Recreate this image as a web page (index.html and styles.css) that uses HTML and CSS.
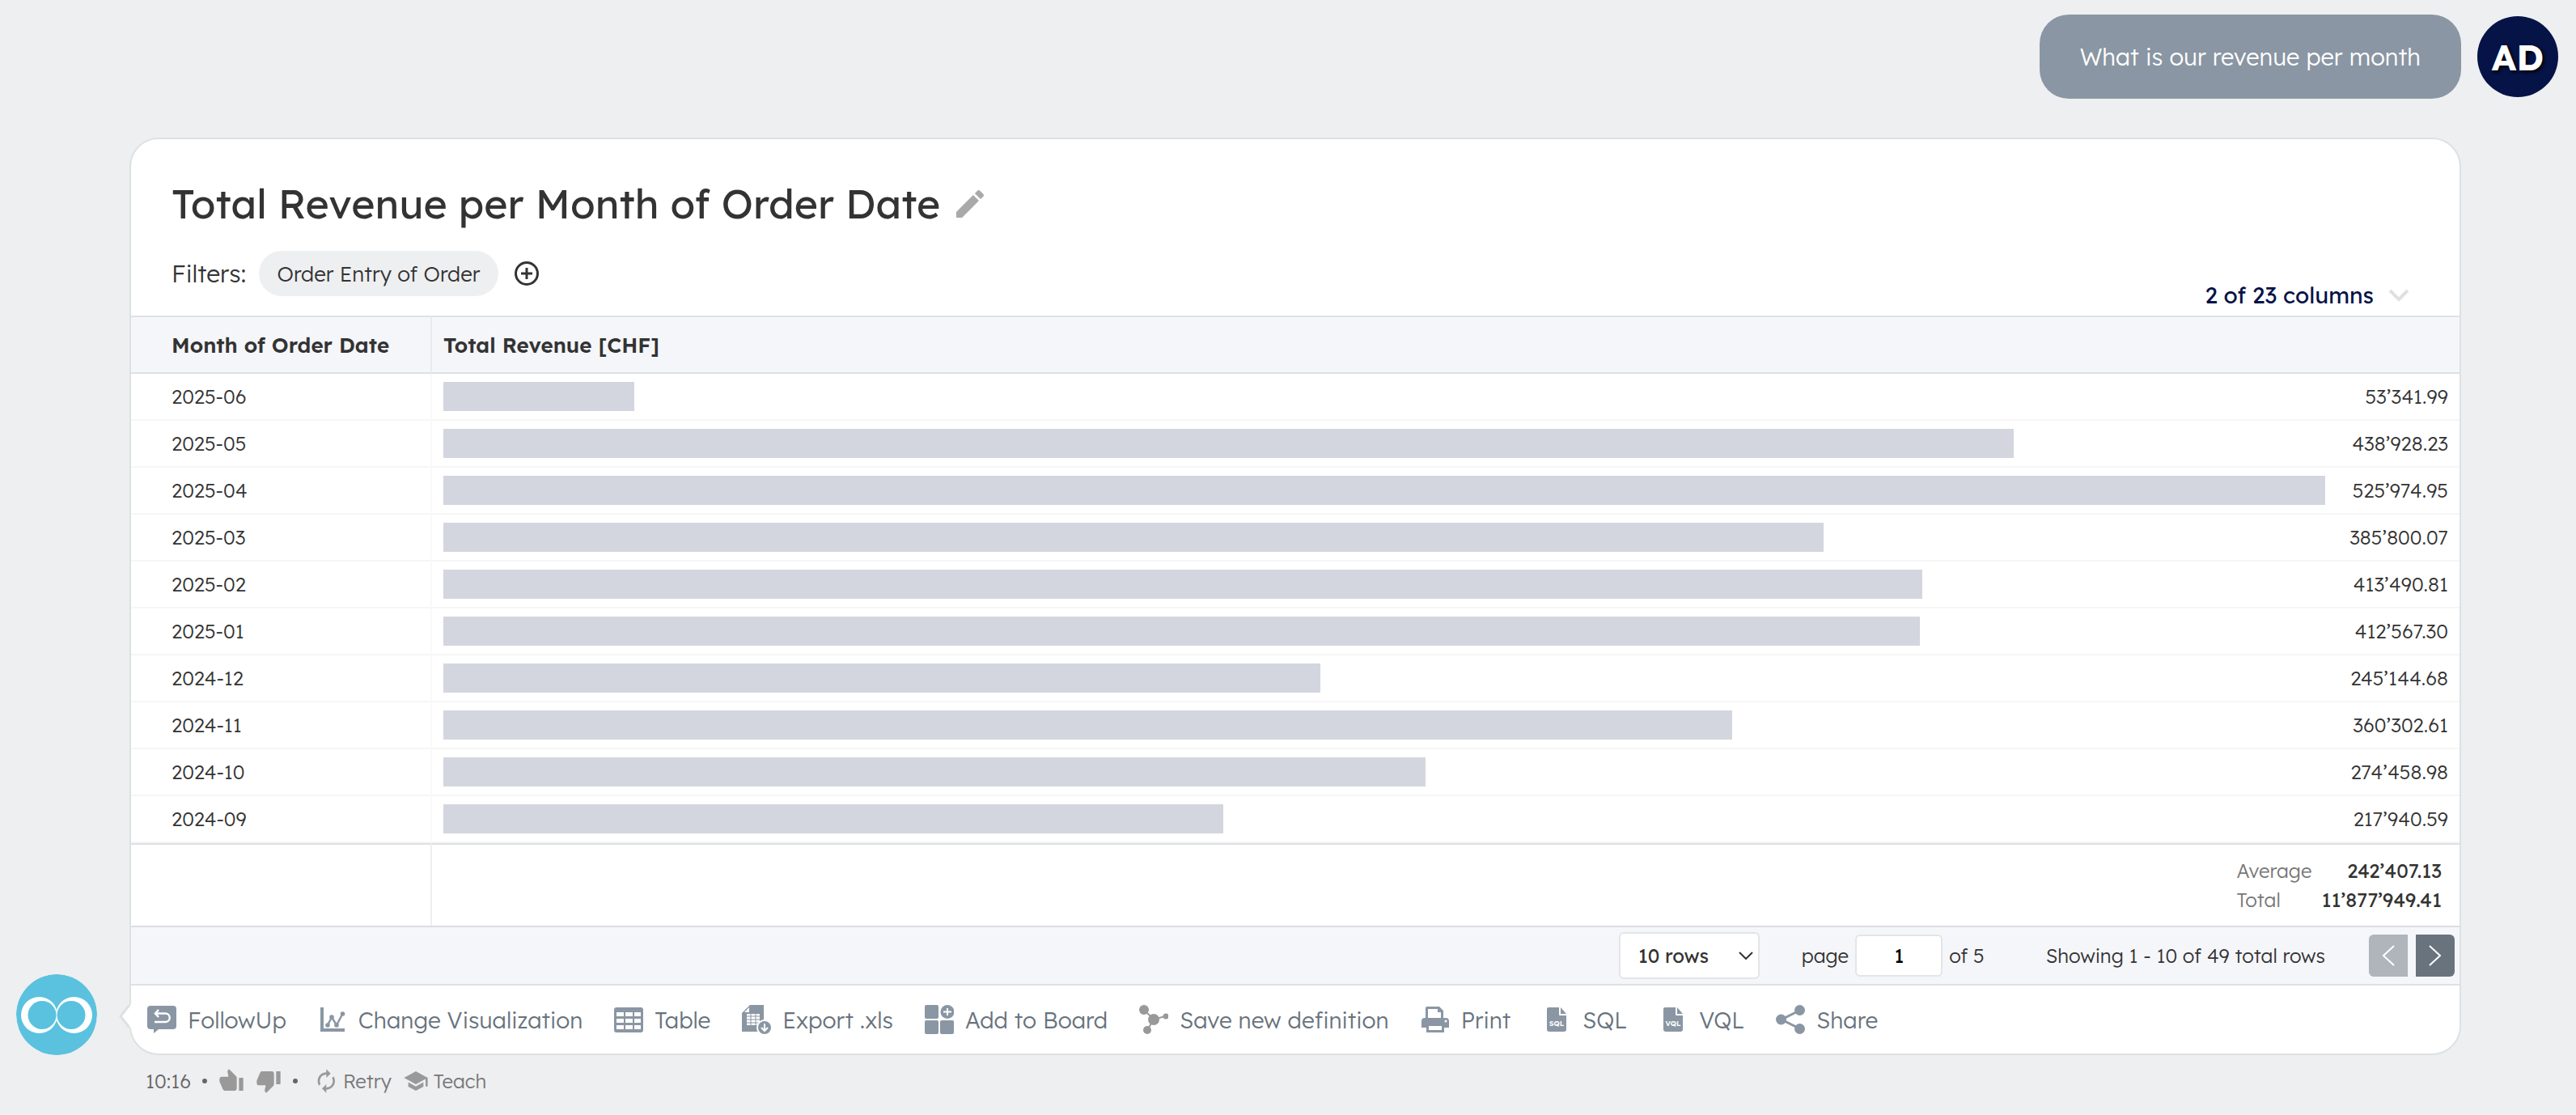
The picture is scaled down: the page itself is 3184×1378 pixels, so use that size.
FILE: index.html
```html
<!DOCTYPE html>
<html lang="en">
<head>
<meta charset="utf-8">
<title>Total Revenue per Month of Order Date</title>
<link rel="stylesheet" href="styles.css">
</head>
<body>
<main class="chat">
  <div class="question">
    <p class="bubble">What is our revenue per month</p>
    <div class="avatar user">AD</div>
  </div>

  <div class="answer">
    <svg class="avatar bot" viewBox="0 0 100 100" role="img" aria-label="Assistant">
      <circle cx="50" cy="50" r="50" fill="#5ac2de"/>
      <circle cx="28.500" cy="50.500" r="22.500" fill="#fff"/>
      <circle cx="71.500" cy="50.500" r="22.500" fill="#fff"/>
      <circle cx="32" cy="50.500" r="17.500" fill="#5ac2de"/>
      <circle cx="68" cy="50.500" r="17.500" fill="#5ac2de"/>
    </svg>

    <article class="card">
      <svg class="tail" viewBox="0 0 15 30" aria-hidden="true"><path d="M15 0 2 15l13 15z" fill="#fff"/><path d="M13 1 2 15l11 14" fill="none" stroke="#dde1e3" stroke-width="3"/></svg>
      <header class="head">
        <div class="title-row">
          <h1>Total Revenue per Month of Order Date</h1>
          <button class="plain" aria-label="Edit title"><svg width="34" height="34" viewBox="3 3 18 18" fill="#a9a9a9"><path d="M3 17.250V21h3.750L17.810 9.940l-3.750-3.750L3 17.250zM20.710 7.040c.39-.39.39-1.020 0-1.410l-2.340-2.340c-.39-.39-1.020-.39-1.410 0l-1.830 1.830 3.750 3.750 1.830-1.830z"/></svg></button>
        </div>
        <div class="filter-row">
          <div class="filters">
            <span class="filters-label">Filters:</span>
            <button class="chip">Order Entry of Order</button>
            <button class="plain" aria-label="Add filter"><svg width="30" height="30" viewBox="0 0 30 30" fill="none" stroke="#333" stroke-width="3"><circle cx="15" cy="15" r="13.500"/><path d="M15 8v14M8 15h14"/></svg></button>
          </div>
          <button class="plain columns"><span>2 of 23 columns</span><svg width="26" height="16" viewBox="0 0 26 16" fill="none" stroke="#e0e0e0" stroke-width="4"><path d="m2 2 11 11L24 2"/></svg></button>
        </div>
      </header>

      <table class="data">
        <thead><tr><th class="month">Month of Order Date</th><th>Total Revenue [CHF]</th></tr></thead>
        <tbody>
          <tr><td>2025-06</td><td><div class="measure"><div class="track"><div class="bar" style="width:10.14%"></div></div><span>53’341.99</span></div></td></tr>
          <tr><td>2025-05</td><td><div class="measure"><div class="track"><div class="bar" style="width:83.45%"></div></div><span>438’928.23</span></div></td></tr>
          <tr><td>2025-04</td><td><div class="measure"><div class="track"><div class="bar" style="width:100%"></div></div><span>525’974.95</span></div></td></tr>
          <tr><td>2025-03</td><td><div class="measure"><div class="track"><div class="bar" style="width:73.35%"></div></div><span>385’800.07</span></div></td></tr>
          <tr><td>2025-02</td><td><div class="measure"><div class="track"><div class="bar" style="width:78.61%"></div></div><span>413’490.81</span></div></td></tr>
          <tr><td>2025-01</td><td><div class="measure"><div class="track"><div class="bar" style="width:78.44%"></div></div><span>412’567.30</span></div></td></tr>
          <tr><td>2024-12</td><td><div class="measure"><div class="track"><div class="bar" style="width:46.61%"></div></div><span>245’144.68</span></div></td></tr>
          <tr><td>2024-11</td><td><div class="measure"><div class="track"><div class="bar" style="width:68.5%"></div></div><span>360’302.61</span></div></td></tr>
          <tr><td>2024-10</td><td><div class="measure"><div class="track"><div class="bar" style="width:52.18%"></div></div><span>274’458.98</span></div></td></tr>
          <tr><td>2024-09</td><td><div class="measure"><div class="track"><div class="bar" style="width:41.44%"></div></div><span>217’940.59</span></div></td></tr>
        </tbody>
        <tfoot><tr><td></td><td><dl class="totals"><dt>Average</dt><dd>242’407.13</dd><dt>Total</dt><dd>11’877’949.41</dd></dl></td></tr></tfoot>
      </table>

      <nav class="pager" aria-label="Pages">
        <div class="select"><select aria-label="Rows per page"><option>10 rows</option><option>25 rows</option></select><svg width="18" height="10" viewBox="0 0 18 10" fill="none" stroke="#333" stroke-width="2"><path d="m1 1 8 8 8-8"/></svg></div>
        <div class="page"><label for="page">page</label><input id="page" type="text" value="1"><span>of 5</span></div>
        <span class="showing">Showing 1 - 10 of 49 total rows</span>
        <div class="steps">
          <button class="step prev" disabled aria-label="Previous page"><svg width="16" height="26" viewBox="0 0 16 26" fill="none" stroke="#fff" stroke-width="2"><path d="M15 1 2 13l13 12"/></svg></button>
          <button class="step next" aria-label="Next page"><svg width="16" height="26" viewBox="0 0 16 26" fill="none" stroke="#fff" stroke-width="2"><path d="m1 1 13 12L1 25"/></svg></button>
        </div>
      </nav>

      <div class="actions">
        <button class="action"><svg viewBox="0 0 36 36"><path d="M4 1h28a4 4 0 0 1 4 4v21a4 4 0 0 1-4 4H14l-6 5v-5H4a4 4 0 0 1-4-4V5a4 4 0 0 1 4-4z"/><path d="m14 6-4 4.500 4 4.500M10 10.500h12.500a5 5 0 0 1 0 10.500H9" fill="none" stroke="#fff" stroke-width="2.500"/></svg>FollowUp</button>
        <button class="action"><svg viewBox="0 0 36 36"><path d="M3 3h4v26h26v4H3z"/><path d="m12 25 5-10 6 10 8-15" fill="none" stroke="#8a96a3" stroke-width="2.500"/><circle cx="12" cy="25" r="2.800"/><circle cx="17" cy="15" r="2.800"/><circle cx="23" cy="25" r="2.800"/><circle cx="30.500" cy="11" r="2.800"/></svg>Change Visualization</button>
        <button class="action"><svg viewBox="0 0 36 36"><path fill-rule="evenodd" d="M3 3h30a3 3 0 0 1 3 3v25a3 3 0 0 1-3 3H3a3 3 0 0 1-3-3V6a3 3 0 0 1 3-3zM3 9v5h9V9zm11 0v5h9V9zm11 0v5h8V9zM3 17v5h9v-5zm11 0v5h9v-5zm11 0v5h8v-5zM3 25v5h9v-5zm11 0v5h9v-5zm11 0v5h8v-5z"/></svg>Table</button>
        <button class="action"><svg viewBox="0 0 36 36"><path d="M10 0h17v33H0V10z"/><path d="M9 3v6H3z" fill="#fff"/><path d="M6 11h16v14H6z" fill="#fff"/><path d="M6 14h16M6 18h16M6 22h16M11 11v14M17 11v14" stroke="#8a96a3"/><circle cx="28" cy="28" r="10" fill="#fff"/><circle cx="28" cy="28" r="8"/><path d="M28 23v9m-4-4 4 4 4-4" fill="none" stroke="#fff" stroke-width="2"/></svg>Export .xls</button>
        <button class="action"><svg viewBox="0 0 36 36"><rect width="17" height="17" rx="2"/><rect y="19" width="17" height="17" rx="2"/><rect x="19" y="19" width="17" height="17" rx="2"/><circle cx="28" cy="8.500" r="8.500"/><path d="M28 4v9M23 8.500h10" stroke="#fff" stroke-width="2"/></svg>Add to Board</button>
        <button class="action"><svg class="gray" viewBox="0 0 36 36"><path d="m5 5 13 13 14-4M18 18l-8 13" fill="none" stroke="#999" stroke-width="2"/><circle cx="6" cy="6" r="6"/><circle cx="18" cy="18" r="7"/><circle cx="33" cy="14" r="3.500"/><circle cx="10" cy="31" r="5"/></svg>Save new definition</button>
        <button class="action"><svg viewBox="0 0 36 36"><path fill-rule="evenodd" d="M8 2h15l5 5v9h3a4 4 0 0 1 4 4v8h-6v6H7v-6H1v-8a4 4 0 0 1 4-4h1V4a2 2 0 0 1 2-2zm1 3v11h16V9h-4V5zm1 21v5h16v-5z"/><circle cx="31" cy="20" r="1.500" fill="#fff"/></svg>Print</button>
        <button class="action"><svg viewBox="0 0 36 36"><path d="M8 3h13v9a1 1 0 0 0 1 1h8v17a3 3 0 0 1-3 3H9a3 3 0 0 1-3-3V5a2 2 0 0 1 2-2zM23 3l7 8h-7z"/><text x="18" y="26" class="filetype">SQL</text></svg>SQL</button>
        <button class="action"><svg viewBox="0 0 36 36"><path d="M8 3h13v9a1 1 0 0 0 1 1h8v17a3 3 0 0 1-3 3H9a3 3 0 0 1-3-3V5a2 2 0 0 1 2-2zM23 3l7 8h-7z"/><text x="18" y="26" class="filetype">VQL</text></svg>VQL</button>
        <button class="action"><svg viewBox="0 0 36 36"><path d="M29 7 7 18l22 11" fill="none" stroke="#8a96a3" stroke-width="3"/><circle cx="29.500" cy="6.500" r="6.500"/><circle cx="6.500" cy="18" r="6.500"/><circle cx="29.500" cy="29.500" r="6.500"/></svg>Share</button>
      </div>
    </article>
  </div>

  <footer class="meta">
    <time>10:16</time>
    <span class="dot"></span>
    <div class="thumbs">
      <button class="plain" aria-label="Good answer"><svg width="32" height="32" viewBox="0 0 24 24" fill="#999"><path transform="matrix(-1 0 0 1 24 0)" d="M1 21h4V9H1v12zm22-11c0-1.100-.9-2-2-2h-6.310l.95-4.570.03-.32c0-.41-.17-.79-.44-1.060L14.170 1 7.590 7.590C7.220 7.950 7 8.450 7 9v10c0 1.100.9 2 2 2h9c.83 0 1.540-.5 1.840-1.220l3.020-7.050c.09-.23.14-.47.14-.73v-2z"/></svg></button>
      <button class="plain" aria-label="Bad answer"><svg width="32" height="32" viewBox="0 0 24 24" fill="#999"><path d="M15 3H6c-.83 0-1.540.5-1.840 1.220l-3.020 7.050c-.09.23-.14.47-.14.73v2c0 1.100.9 2 2 2h6.310l-.95 4.570-.03.32c0 .41.17.79.44 1.060L9.830 23l6.590-6.590c.36-.36.58-.86.58-1.410V5c0-1.100-.9-2-2-2zm4 0v12h4V3h-4z"/></svg></button>
    </div>
    <span class="dot"></span>
    <div class="meta-actions">
      <button class="plain meta-action"><svg width="28" height="32" viewBox="2 0 21 24" fill="#999"><path d="M12 6v3l4-4-4-4v3c-4.420 0-8 3.580-8 8 0 1.570.46 3.030 1.240 4.260L6.700 14.800c-.45-.83-.7-1.790-.7-2.800 0-3.310 2.690-6 6-6zm6.760 1.740L17.300 9.200c.44.84.7 1.790.7 2.800 0 3.310-2.690 6-6 6v-3l-4 4 4 4v-3c4.420 0 8-3.580 8-8 0-1.570-.46-3.030-1.240-4.260z"/></svg>Retry</button>
      <button class="plain meta-action"><svg width="32" height="32" viewBox="0 0 24 24" fill="#999"><path d="M5 13.180v4L12 21l7-3.820v-4L12 17l-7-3.820zM12 3L1 9l11 6 9-4.910V17h2V9L12 3z"/></svg>Teach</button>
    </div>
  </footer>
</main>
</body>
</html>
```
FILE: styles.css
```css
* { box-sizing: border-box; }

body {
  margin: 0;
  background: #eeeff1;
  color: #333;
  font-family: "Lexend", "Inter", sans-serif;
  font-size: 24px;
  font-weight: 300;
}

h1, p, dl, dd { margin: 0; }

button, input, select { font: inherit; color: inherit; }

.plain { padding: 0; border: 0; background: none; display: flex; align-items: center; }

.chat { padding: 18px 22px 0 20px; }

.question { display: flex; justify-content: flex-end; align-items: center; gap: 20px; }

.bubble {
  padding: 32px 50px;
  border-radius: 36px;
  background: #8a96a3;
  color: #fff;
  font-size: 29px;
  line-height: 40px;
}

.avatar { flex: none; width: 100px; height: 100px; border-radius: 50%; }

.user {
  display: flex;
  align-items: center;
  justify-content: center;
  background: #051347;
  color: #fff;
  font-size: 44px;
  font-weight: 700;
  text-shadow: 2px 2px 4px #000;
}

.answer { display: flex; align-items: flex-end; gap: 40px; margin: 48px 120px 0 0; }

.card {
  position: relative;
  flex: 1;
  border: 2px solid #dde1e3;
  border-radius: 36px;
  background: #fff;
}

.tail { position: absolute; left: -15px; bottom: 31px; width: 15px; height: 30px; }

.head { padding: 50px 62px 0 50px; }

.title-row { display: flex; align-items: center; gap: 20px; }

h1 { font-size: 50px; font-weight: 400; line-height: 60px; }

.filter-row { display: flex; justify-content: space-between; align-items: flex-end; margin-top: 28px; }

.filters { display: flex; align-items: center; gap: 16px; padding-bottom: 24px; }

.filters-label { font-size: 30px; line-height: 38px; }

.chip {
  height: 56px;
  margin-right: 4px;
  padding: 0 22px;
  border: 0;
  border-radius: 28px;
  background: #eeeff1;
  font-size: 26px;
}

.columns { gap: 18px; padding-bottom: 8px; color: #051347; font-size: 28px; font-weight: 400; line-height: 34px; }

.data { width: 100%; border-collapse: separate; border-spacing: 0; }

.data th {
  height: 72px;
  padding: 0 14px;
  border-top: 2px solid #dde1e3;
  border-bottom: 2px solid #dde1e3;
  background: #f5f6fa;
  font-size: 26px;
  font-weight: 600;
  text-align: left;
}

.data th:first-child { border-right: 2px solid #e8eaed; }

.data .month { width: 372px; }

.data th:first-child, .data td:first-child { padding-left: 50px; }

.data td { height: 58px; padding: 0 14px; border-bottom: 2px solid #f6f6f7; }

.data td:first-child { border-right: 2px solid #f9f9fa; }

.measure { display: flex; align-items: center; }

.measure span { width: 152px; text-align: right; }

.track { flex: 1; }

.bar { height: 36px; background: #d3d6de; }

.data tfoot td { height: 102px; padding: 0 22px; border-top: 2px solid #dde1e3; border-bottom: 0; }

.data tfoot td:first-child { border-right-color: #eeeff1; }

.totals {
  display: grid;
  grid-template-columns: max-content max-content;
  justify-content: end;
  column-gap: 12px;
  line-height: 36px;
}

.totals dt { color: #777; }

.totals dd { font-weight: 400; text-align: right; }

.pager {
  display: flex;
  align-items: center;
  justify-content: flex-end;
  height: 74px;
  padding-right: 6px;
  border-top: 2px solid #dbdde2;
  border-bottom: 2px solid #dde1e3;
  background: #f5f6fa;
}

.select { position: relative; margin-right: 52px; }

.select select {
  width: 174px;
  height: 58px;
  padding: 0 22px;
  border: 2px solid #e4e5e7;
  border-radius: 6px;
  background: #fff;
  font-weight: 400;
  appearance: none;
}

.select svg { position: absolute; right: 8px; top: 24px; }

.page { display: flex; align-items: center; gap: 8px; margin-right: 76px; }

.page input {
  width: 108px;
  height: 52px;
  border: 2px solid #e4e5e7;
  border-radius: 6px;
  background: #fff;
  color: #000;
  font-weight: 400;
  text-align: center;
}

.showing { margin-right: 54px; }

.steps { display: flex; gap: 10px; }

.step {
  display: flex;
  align-items: center;
  justify-content: center;
  width: 48px;
  height: 52px;
  padding: 0;
  border: 0;
}

.prev { border-radius: 6px 0 0 6px; background: #b0b4bb; }

.next { border-radius: 0 6px 6px 0; background: #68737d; }

.actions { display: flex; flex-wrap: wrap; gap: 0 39px; padding: 0 20px; }

.action {
  display: flex;
  align-items: center;
  gap: 14px;
  height: 84px;
  padding: 0;
  border: 0;
  background: none;
  color: #68737d;
  font-size: 28px;
}

.action svg { width: 36px; height: 36px; fill: #8a96a3; }

.action .gray { fill: #999; }

.action .filetype { fill: #fff; font-size: 9px; font-weight: 600; text-anchor: middle; }

.meta { display: flex; align-items: center; gap: 14px; margin: 16px 0 0 160px; color: #666; line-height: 32px; }

.dot { width: 6px; height: 6px; border-radius: 50%; background: #666; }

.thumbs { display: flex; gap: 14px; }

.meta-actions { display: flex; gap: 14px; margin-left: 8px; }

.meta-action { gap: 6px; color: #777; }
```
